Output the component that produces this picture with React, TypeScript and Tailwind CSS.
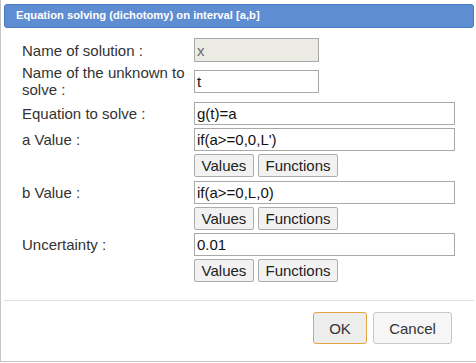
import React from 'react'

const font = { fontFamily: '"Liberation Sans", Arial, sans-serif' }

function Field({ value, wide }: { value: string; wide?: boolean }) {
	return (
		<div className={`h-[23px] box-border border border-[#a9a9a9] px-[2px] flex items-center text-[15px] leading-none bg-white text-[#111]
			${wide ? 'w-[261px]' : 'w-[125px]'}`}>
			{value}
		</div>
	)
}

function HelperButtons() {
	return (
		<div className="flex gap-[4px] mt-[3px]">
			<button className="h-[23px] w-[60px] box-border border border-[#adadad] rounded-[2px] bg-[#f2f2f2] text-[15px] text-[#222] leading-none">Values</button>
			<button className="h-[23px] w-[80px] box-border border border-[#adadad] rounded-[2px] bg-[#f2f2f2] text-[15px] text-[#222] leading-none">Functions</button>
		</div>
	)
}

function Row({ label, children, className = '', center }: { label: React.ReactNode; children: React.ReactNode; className?: string; center?: boolean }) {
	return (
		<div className={`flex ${center ? 'items-center' : 'items-start'} ${className}`}>
			<div className="w-[172px] h-[23px] flex items-center text-[15px] leading-[17px] text-[#333] pr-2 whitespace-nowrap">{label}</div>
			<div className="flex flex-col">{children}</div>
		</div>
	)
}

export default function App() {
	return (
		<div className="w-[476px] h-[363px] bg-white" style={font}>
			<div className="w-[476px] h-[362px] box-border border-l border-b border-[#c5c5c5] pt-[4px] pl-[3px] flex flex-col">
				{/* title bar */}
				<div className="w-[470px] h-[24px] box-border border border-[#4a7cc6] rounded-[3px] bg-[#5f8dd2] flex items-center pl-[11px]">
					<span className="text-white font-bold text-[11.2px] leading-none">Equation solving (dichotomy) on interval [a,b]</span>
				</div>

				<div className="pl-[18px] pt-[10px] flex flex-col">
					<Row label="Name of solution :" center>
						<div className="h-[24px] w-[125px] box-border border border-[#a9a9a9] bg-[#ebebe4] text-[#6d6d6d] px-[2px] flex items-center text-[15px] leading-none">x</div>
					</Row>
					<div className="flex items-center h-[34px] mt-[2px]">
						<div className="w-[172px] text-[15px] leading-[17px] text-[#333]">Name of the unknown to<br />solve :</div>
						<Field value="t" />
					</div>
					<Row label="Equation to solve :" className="mt-[4px]">
						<Field value="g(t)=a" wide />
					</Row>
					<Row label="a Value :" className="mt-[3px]">
						<Field value="if(a>=0,0,L')" wide />
						<HelperButtons />
					</Row>
					<Row label="b Value :" className="mt-[4px]">
						<Field value="if(a>=0,L,0)" wide />
						<HelperButtons />
					</Row>
					<Row label="Uncertainty :" className="mt-[3px]">
						<Field value="0.01" wide />
						<HelperButtons />
					</Row>
				</div>

				<div className="mt-auto">
					<div className="w-[470px] h-px bg-[#dddddd]" />
					<div className="flex justify-end gap-[6px] pr-[24px] pt-[11px] pb-[17px]">
						<button className="h-[32px] w-[54px] box-border border border-[#e5a43f] rounded-[3px] bg-[#ededed] text-[15px] text-[#333] leading-none">OK</button>
						<button className="h-[32px] w-[79px] box-border border border-[#c8c8c8] rounded-[3px] bg-[#f6f6f6] text-[15px] text-[#333] leading-none">Cancel</button>
					</div>
				</div>
			</div>
		</div>
	)
}
